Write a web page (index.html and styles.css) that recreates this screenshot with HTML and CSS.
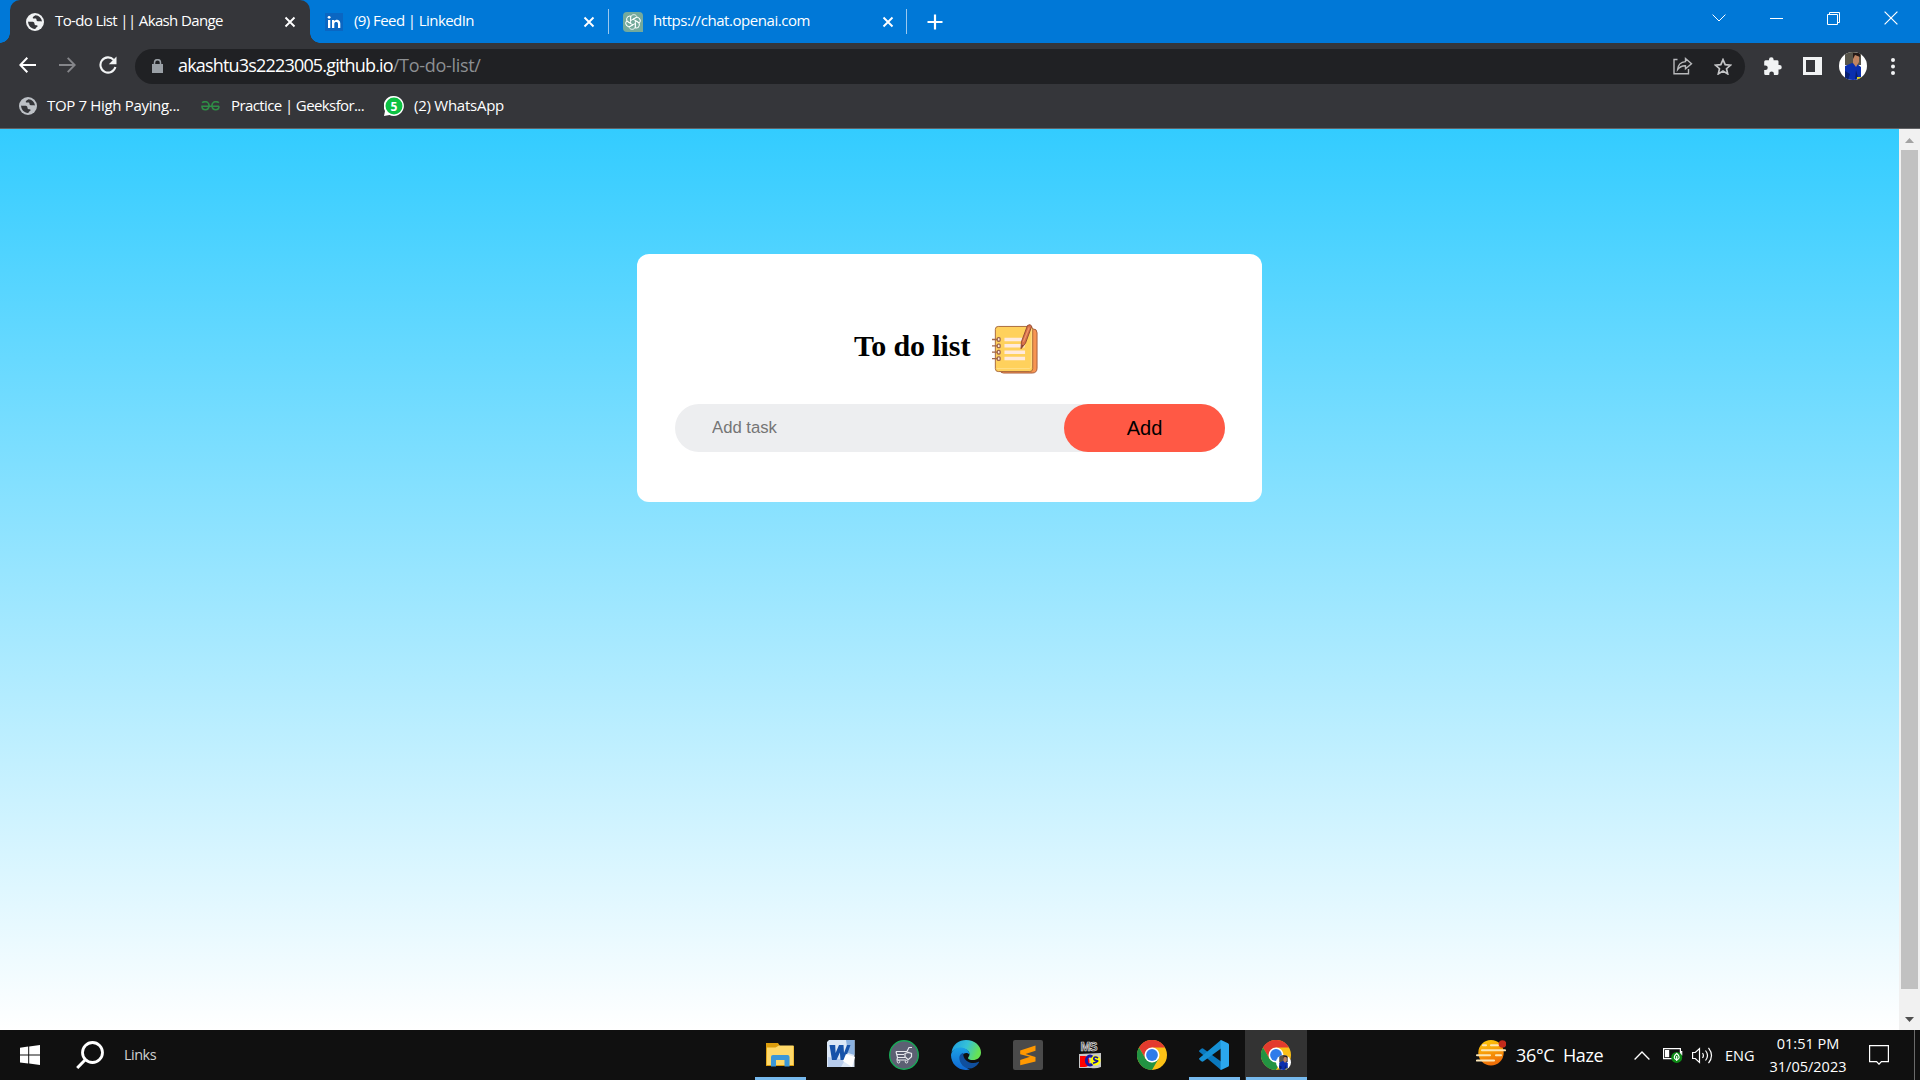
FILE: index.html
```html
<!DOCTYPE html>
<html lang="en">
<head>
<meta charset="utf-8">
<title>To-do List || Akash Dange</title>
<link rel="stylesheet" href="styles.css">
</head>
<body>
<svg class="defs" width="0" height="0">
  <defs>
    <symbol id="globe" viewBox="0 0 18 18">
      <circle cx="9" cy="9" r="9" fill="currentColor"/>
      <path d="M9.500 2.200C8.500 3 7 3.300 6.700 4.800c.2 1.200 2 .6 3.200.8 1 .5.2 1.900 1.200 2.400 1.400.5 3.500-.3 4.900.6-.3-3.400-3-6.200-6.500-6.400zM2.100 8.600c1.600.6 4.400-.3 5.800.7 1 .8.200 2 1.100 2.600 1 .5 2.300-.1 2.700 1-.2 1.100-1.900 1.400-2.400 3-4 .2-7.300-3.100-7.200-7.300z" fill="#35363a"/>
    </symbol>
    <symbol id="cross" viewBox="0 0 12 12"><path d="M1.500 1.500l9 9M10.500 1.500l-9 9" stroke="#fff" stroke-width="1.900" fill="none"/></symbol>
    <symbol id="chrome" viewBox="0 0 30 30">
      <circle cx="15" cy="15" r="15" fill="#fbc116"/>
      <path d="M2 7.500A15 15 0 0 1 28 7.500H15L8.500 18.700z" fill="#e33b2e"/>
      <path d="M2 7.500A15 15 0 0 0 15 30l6.500-11.200L15 22.500 8.500 18.700z" fill="#229342"/>
      <circle cx="15" cy="15" r="7.500" fill="#fff"/>
      <circle cx="15" cy="15" r="5.900" fill="#2f7bea"/>
    </symbol>
    <symbol id="avatar" viewBox="0 0 28 28">
      <clipPath id="round"><circle cx="14" cy="14" r="14"/></clipPath>
      <g clip-path="url(#round)">
        <path d="M0 0h28v28H0z" fill="#fff"/>
        <path d="M6 0h16v13H6z" fill="#57544a"/>
        <path d="M6 14l7-3 5 1 4 3v13H6z" fill="#0b2fae"/>
        <path d="M6 19l5 3-2 6H6zM17 18l2 7-3 3z" fill="#081f70"/>
        <path d="M14 3h6v7l-3 5-3-4z" fill="#c18462"/>
        <path d="M14 1h7v4l-5-2-2 4z" fill="#241a18"/>
        <path d="M18 25h4v3h-4z" fill="#e2d217"/>
      </g>
    </symbol>
  </defs>
</svg>

<header class="browser">
  <div class="tabstrip">
    <div class="tab tab-active">
      <svg class="favicon white" width="18" height="18"><use href="#globe"/></svg>
      <span class="t-title t1">To-do List || Akash Dange</span>
      <svg class="close" width="12" height="12"><use href="#cross"/></svg>
    </div>
    <div class="tab">
      <svg class="favicon" width="18" height="18" viewBox="0 0 18 18"><path d="M0 0h18v18H0z" fill="#0a66c2"/><path d="M3 7h2.300v8H3z M7 7h2.200v1.200C10.500 6 15.300 6 15.300 10.500V15H13v-4.200c0-2.600-3.700-2.400-3.700 0V15H7z" fill="#fff"/><circle cx="4.100" cy="4.300" r="1.400" fill="#fff"/></svg>
      <span class="t-title t2">(9) Feed | LinkedIn</span>
      <svg class="close" width="12" height="12"><use href="#cross"/></svg>
    </div>
    <div class="tab tab-wide">
      <svg class="favicon" width="20" height="20" viewBox="0 0 20 20"><path d="M4 0h12a4 4 0 0 1 4 4v16H4a4 4 0 0 1-4-4V4a4 4 0 0 1 4-4z" fill="#74aa9c"/>
        <g fill="none" stroke="#fff" stroke-width=".9"><path id="petal" d="M7.600 11.400V6c0-3.800 5-4.500 6.300-1.300M9.900 7.300l4.300-2.400"/><use href="#petal" transform="rotate(60 10 10)"/><use href="#petal" transform="rotate(120 10 10)"/><use href="#petal" transform="rotate(180 10 10)"/><use href="#petal" transform="rotate(240 10 10)"/><use href="#petal" transform="rotate(300 10 10)"/></g></svg>
      <span class="t-title t3">https://chat.openai.com</span>
      <svg class="close" width="12" height="12"><use href="#cross"/></svg>
    </div>
    <svg class="newtab" width="16" height="16" viewBox="0 0 16 16"><path d="M8 .5v15M.5 8h15" stroke="#fff" stroke-width="2.200"/></svg>
    <div class="winctl">
      <svg width="14" height="8" viewBox="0 0 14 8"><path d="M.6.6L7 7 13.400.6" fill="none" stroke="#fff"/></svg>
      <svg width="13" height="13" viewBox="0 0 13 13"><path d="M0 6.500h13" stroke="#fff"/></svg>
      <svg width="13" height="13" viewBox="0 0 13 13"><path d="M.5 2.500h10v10H.5zM2.500 2.500v-2h10v10h-2" fill="none" stroke="#fff"/></svg>
      <svg width="14" height="14" viewBox="0 0 14 14"><path d="M.6.6l12.800 12.800M13.400.6L.6 13.400" stroke="#fff" stroke-width="1.200"/></svg>
    </div>
  </div>

  <div class="toolbar">
    <svg class="back" width="17" height="16" viewBox="0 0 17 16"><path d="M8.300.8L1.300 8l7 7.200M1.500 8H17" fill="none" stroke="#fff" stroke-width="2"/></svg>
    <svg class="forward" width="17" height="16" viewBox="0 0 17 16"><path d="M8.700.8l7 7.200-7 7.200M15.500 8H0" fill="none" stroke="#85868a" stroke-width="1.900"/></svg>
    <svg class="reload" width="18" height="18" viewBox="0 0 18 18"><path d="M14.700 3.900A7.600 7.600 0 1 0 16.400 11" fill="none" stroke="#f1f3f4" stroke-width="2.100"/><path d="M17.500.5v7.700H9.800z" fill="#f1f3f4"/></svg>
    <div class="omnibox">
      <svg class="lock" width="11" height="14" viewBox="0 0 11 14"><path d="M0 5h11v9H0z" fill="#9aa0a6"/><path d="M2.500 5.500V3.700a3 3 0 0 1 6 0v1.800" fill="none" stroke="#9aa0a6" stroke-width="1.500"/></svg>
      <span class="host">akashtu3s2223005.github.io</span><span class="path">/To-do-list/</span>
      <svg class="share" width="20" height="18" viewBox="0 0 20 18"><path d="M4.500 2.500H1v14.300h14.500V12" fill="none" stroke="#b8b9bb" stroke-width="1.400"/><path d="M12.500 1.500L18.500 6.700l-6 5V8.800C8.500 8.600 6.500 10 4.600 12.600 5 8 7.500 5 12.500 4.600z" fill="none" stroke="#b8b9bb" stroke-width="1.400"/></svg>
      <svg class="star" width="18" height="17" viewBox="0 0 18 17"><path d="M9 1.600l2.200 5 5.300.5-4 3.600 1.200 5.200L9 13.100l-4.700 2.800 1.200-5.200-4-3.600 5.300-.5z" fill="none" stroke="#c4c5c7" stroke-width="1.700"/></svg>
    </div>
    <svg class="ext" width="18" height="18" viewBox="0 0 18 18"><path d="M1.600 3.200H5V2.500a2.300 2.300 0 0 1 4.600 0v.7h3.500q1.400 0 1.400 1.400v3.500h1a2.200 2.200 0 0 1 0 4.500h-1v3.800q0 1.600-1.500 1.600H9.900v-1.200a2.300 2.300 0 0 0-4.600 0V18H1.600Q.2 18 .2 16.500v-3.400h1.200a2.300 2.300 0 0 0 0-4.700H.2V4.700q0-1.500 1.400-1.500z" fill="#f1f3f4"/></svg>
    <svg class="side" width="19" height="18" viewBox="0 0 19 18"><path fill-rule="evenodd" d="M0 0h19v18H0zM3 3v12h9V3z" fill="#f1f3f4"/></svg>
    <svg class="face" width="28" height="28"><use href="#avatar"/></svg>
    <svg class="dots" width="4" height="17" viewBox="0 0 4 17"><g fill="#f1f3f4"><circle cx="2" cy="2" r="2"/><circle cx="2" cy="8.500" r="2"/><circle cx="2" cy="15" r="2"/></g></svg>
  </div>

  <nav class="bookmarks">
    <svg class="gray" width="18" height="18"><use href="#globe"/></svg>
    <span class="b1">TOP 7 High Paying...</span>
    <svg class="gfg" width="19" height="10" viewBox="0 0 19 10"><path d="M1 1.700C5-1 8.500 1.800 8 5.200 7.500 10 1 9.800 1 5.200H18M18 1.700C14-1 10.500 1.800 11 5.200 11.500 10 18 9.800 18 5.200" fill="none" stroke="#2f8d46" stroke-width="1.600"/></svg>
    <span class="b2">Practice | Geeksfor...</span>
    <svg class="wa" width="20" height="20" viewBox="0 0 20 20"><path d="M10 0a10 10 0 1 1-4.500 19L0 20l1-5A10 10 0 0 1 10 0z" fill="#fff"/><circle cx="10" cy="10" r="8.500" fill="#0dc143"/><text x="10" y="14.500" class="count">5</text></svg>
    <span class="b3">(2) WhatsApp</span>
  </nav>
</header>

<div class="viewport">
  <main class="page">
    <section class="card">
      <h2><span>To do list</span>
        <svg width="46" height="50" viewBox="0 0 48 51" preserveAspectRatio="none">
          <path d="M8 5h35q4 0 4 4v36q0 5-5 5H12q-3 0-4-3z" fill="#f79552" stroke="#a55b3a"/>
          <rect x="3.500" y="2.500" width="39" height="46" rx="3" fill="#ffd15c" stroke="#a8693c"/>
          <path d="M5 45.500h34q2 0 2-3V4" fill="none" stroke="#ffe08a"/>
          <g fill="#ffeade"><path d="M13 14h21v3.500H13zM13 20.500h21V24H13zM13 27h21.500v3.500H13zM13 33.500h21.500V37H13z"/></g>
          <g fill="#ffe9dc" stroke="#a16649" stroke-width="1.300"><rect x="5.500" y="14" width="3" height="3.600" rx="1"/><rect x="5.500" y="20.500" width="3" height="3.600" rx="1"/><rect x="5.500" y="27" width="3" height="3.600" rx="1"/><rect x="5.500" y="33.500" width="3" height="3.600" rx="1"/><path d="M0 15.800h5.500M0 22.300h5.500M0 28.800h5.500M0 35.300h5.500"/></g>
          <path d="M37 1.500q3-2 4.500.7L35 19.500l-4.700 5.700.4-7z" fill="#d9714a" stroke="#954b34"/>
          <path d="M38.800 3.500L32.800 18" stroke="#f1996b" stroke-width="1.200"/>
          <path d="M31 21l2 1-2.700 3.200z" fill="#834232"/>
        </svg>
      </h2>
      <form class="row">
        <input type="text" placeholder="Add task">
        <button type="button">Add</button>
      </form>
    </section>
  </main>
  <aside class="scrollbar">
    <svg width="9" height="5" viewBox="0 0 9 5"><path d="M0 5l4.500-5L9 5z" fill="#a3a3a3"/></svg>
    <div class="thumb"></div>
    <svg width="9" height="5" viewBox="0 0 9 5"><path d="M0 0l4.500 5L9 0z" fill="#505050"/></svg>
  </aside>
</div>

<footer class="taskbar">
  <div class="left">
    <svg width="20" height="20" viewBox="0 0 20 20"><path d="M0 2.800l8.200-1.200V9.500H0zM9.200 1.400L20 0v9.500H9.200zM0 10.500h8.200v8L0 17.400zM9.200 10.500H20V20L9.200 18.600z" fill="#fff"/></svg>
    <svg class="search" width="28" height="28" viewBox="0 0 28 28"><circle cx="16.500" cy="11.500" r="10" fill="none" stroke="#fff" stroke-width="2.800"/><path d="M9.500 18.500L1.200 27" stroke="#fff" stroke-width="3"/></svg>
    <span class="links">Links</span>
  </div>
  <div class="apps">
    <div class="app open"><svg width="28" height="24" viewBox="0 0 28 24"><path d="M0 0h12l2 3H28v20H0z" fill="#dc9d0c"/><path d="M1 4.500h8.500L13 2.500h14.500V22H.7z" fill="#ffd969"/><path d="M5 23.500V14q0-2 2-2h14.500q2 0 2 2v9.500h-5V17H10v6.500z" fill="#3c98d8"/></svg></div>
    <div class="app word"><svg width="28" height="28" viewBox="0 0 28 28"><path d="M2 0h25.500v27H0V2z" fill="#dbe7f6"/><path d="M19 0h8.500v15L21 13z" fill="#8bb1df"/><path d="M1 17l17 3-4 7H1z" fill="#b7ccec"/><path d="M2.500 5h5.700l.4 8L12 5h4.500l.5 8 3-8h3.500L18 20h-4.500l-.6-7.500L9.500 20H5z" fill="#1652a9"/><path d="M19 14l9 3-3 10-9-6z" fill="#fff"/></svg></div>
    <div class="app"><svg width="30" height="30" viewBox="0 0 30 30"><circle cx="15" cy="15" r="14.300" fill="#5c6073" stroke="#18a957" stroke-width="1.400"/><path d="M7 11.500l1.500 6H16M7 11.500h11l2-4h3M8.500 17.500L8 20h9M8 14.500h7" fill="none" stroke="#e8e9ee" stroke-width="1.200"/><circle cx="9.500" cy="21.700" r="1.300" fill="none" stroke="#e8e9ee"/><circle cx="17.500" cy="21.700" r="1.300" fill="none" stroke="#e8e9ee"/><path d="M16 13.500l3.200-1 3.300 1v3.300l-3.300 3-3.200-3z" fill="#5c6073" stroke="#e8e9ee" stroke-width="1.200"/></svg></div>
    <div class="app"><svg width="30" height="30" viewBox="0 0 30 30">
      <defs><linearGradient id="eg" x1="0" x2="1" y1="0" y2=".3"><stop offset="0" stop-color="#1c9be0"/><stop offset=".55" stop-color="#35c1d8"/><stop offset="1" stop-color="#66e254"/></linearGradient><linearGradient id="eb" x1="0" y1="0" x2="0" y2="1"><stop offset="0" stop-color="#1ba0e6"/><stop offset="1" stop-color="#1067d2"/></linearGradient></defs>
      <path d="M.5 12C2 4 8 0 15 0c9 0 15 6 15 12.500 0 5-4 7.500-8 7.500-5 0-5.500-2-4.500-3 2-2.500 1-6-2.500-7.500C9 7 3 9 .5 12z" fill="url(#eg)"/>
      <path d="M0 15C.5 10 5 7 10 7.500c5 .2 8.500 3.500 8.700 7.200-2.500-3-6.500-1.700-7.700 1.300-1 4 2 11 8 13.500C9 32 0 25 0 15z" fill="url(#eb)"/>
      <path d="M11.500 13C7 15 7.500 21 11.500 25.500c5 4.800 12 4 16.500-3 .2-.7-.3-.9-.9-.6-5 2.600-12 .5-14.100-4.400-.8-1.700-.9-3-.5-4.500z" fill="#104f9e"/></svg></div>
    <div class="app"><svg width="30" height="30" viewBox="0 0 30 30"><rect width="30" height="30" rx="2" fill="#4a4a4a"/><path d="M7.200 10.600L22.500 5.500v5.200L12.500 14l10 2.900v4.600L7.200 25.200V20l9.800-3.200-9.800-2.600z" fill="#ff9800"/></svg></div>
    <div class="app"><svg width="22" height="28" viewBox="0 0 22 28"><path d="M0 13l22-1v14q-5 2-10 1H0z" fill="#c7c7c7"/><text x="1.500" y="10" class="ms" textLength="17">MS</text><path d="M1 15h5c6 0 6 11 0 11H1z" fill="#f00"/><ellipse cx="11" cy="19.500" rx="3.600" ry="4.500" fill="none" stroke="#1717a8" stroke-width="3"/><circle cx="16.500" cy="19.500" r="5" fill="#ff0"/><path d="M19 17q-3-2-4 0t2.500 2.500-3.500 2.800" fill="none" stroke="#16169c" stroke-width="1.700"/></svg></div>
    <div class="app"><svg width="30" height="30"><use href="#chrome"/></svg></div>
    <div class="app open"><svg width="30" height="30" viewBox="0 0 30 30"><path d="M2.300 8.800L.3 10.500q-.5.700 0 1.300L22 30V21.500L4.500 8.700q-1.200-.7-2.200.1z" fill="#0a78be"/><path d="M2.300 21.200l-2-1.700q-.5-.7 0-1.300L22 0v8.500L4.500 21.300q-1.200.7-2.200-.1z" fill="#1690d4"/><path d="M22 0l7 3.200q1 .5 1 1.500v20.600q0 1-1 1.500L22 30c-.6-.5-.7-1.300-.4-2.200V2.200c-.3-.9-.2-1.700.4-2.200z" fill="#2ba7ee"/></svg></div>
    <div class="app open current"><svg width="30" height="30" viewBox="0 0 30 30"><use href="#chrome" width="30" height="30"/><use href="#avatar" x="15" y="15" width="15" height="15"/></svg></div>
  </div>
  <div class="tray">
    <svg width="30" height="26" viewBox="0 0 30 26"><defs><linearGradient id="sun" x1="0" y1="0" x2=".3" y2="1"><stop offset="0" stop-color="#ffcf0a"/><stop offset="1" stop-color="#f07008"/></linearGradient></defs><circle cx="15" cy="12.700" r="12.700" fill="url(#sun)"/><g stroke="#fbe6b5" stroke-width="2.100" stroke-linecap="round"><path d="M7 5.200h3M15 5.200h7M6 10.300h23M1 15.200h13M20 15.200h5M1 20.500h17"/></g><circle cx="26.500" cy="4" r="3.800" fill="#c42b1c"/></svg>
    <span class="temp">36°C&nbsp; Haze</span>
    <svg class="up" width="16" height="9" viewBox="0 0 16 9"><path d="M.6 8.500L8 1l7.400 7.500" fill="none" stroke="#fff" stroke-width="1.300"/></svg>
    <svg class="batt" width="20" height="16" viewBox="0 0 20 16"><path d="M.6 1.600h16.800v10H.6zM17.500 4.500h1.200v4" fill="none" stroke="#fff" stroke-width="1.200"/><path d="M2 3h4.200v7.200H2z" fill="#fff"/><circle cx="13.700" cy="10.400" r="5.500" fill="#0e8a16"/><path d="M13.700 6.500q5 4 0 6.500-5-2.500 0-6.500zM13.700 9v5" fill="none" stroke="#fff" stroke-width="1.200"/></svg>
    <svg class="vol" width="21" height="17" viewBox="0 0 21 17"><path d="M.6 5.500h2.700L7.500 1.600v13.800L3.300 11.500H.6z" fill="none" stroke="#fff" stroke-width="1.200"/><path d="M10.500 6q1.800 2.500 0 5M13.500 3.500q4 5 0 10M16.500.8q6 7.700 0 15.400" fill="none" stroke="#fff" stroke-width="1.200"/></svg>
    <span class="lang">ENG</span>
    <div class="clock"><span class="time">01:51 PM</span><span class="date">31/05/2023</span></div>
    <svg class="note" width="20" height="20" viewBox="0 0 20 20"><path d="M.6.6h18.800v16h-7L10 19.200 7.600 16.600h-7z" fill="none" stroke="#fff" stroke-width="1.200"/></svg>
    <i class="peek"></i>
  </div>
</footer>
</body>
</html>
```
FILE: styles.css
```css
* { box-sizing: border-box; }
body {
  margin: 0;
  width: 1920px;
  height: 1080px;
  overflow: hidden;
  display: flex;
  flex-direction: column;
  font-family: "Open Sans", "Noto Sans", sans-serif;
  font-size: 15px;
  color: #fff;
}
.defs { position: absolute; }
svg { display: block; flex: none; }
span { white-space: nowrap; }

/* Browser window */
.browser { height: 129px; background: #35363a; border-bottom: 1px solid #626366; }
.tabstrip { height: 43px; background: #0078d7; display: flex; align-items: center; padding-left: 10px; }
.tab { width: 299px; height: 25px; display: flex; align-items: center; padding: 0 13px 0 15px; border-right: 1px solid #9bc9ef; }
.tab-wide { padding: 0 12px 0 14px; width: 298px; }
.tab-active {
  position: relative;
  width: 300px;
  height: 43px;
  background: #35363a;
  border: 0;
  border-radius: 10px 10px 0 0;
  padding: 0 14px 0 16px;
}
.tab-active::before, .tab-active::after {
  content: "";
  position: absolute;
  bottom: 0;
  width: 10px;
  height: 10px;
}
.tab-active::before { left: -10px; background: radial-gradient(circle at 0 0, transparent 9.5px, #35363a 10px); }
.tab-active::after { right: -10px; background: radial-gradient(circle at 100% 0, transparent 9.5px, #35363a 10px); }
.t-title { margin-left: 11px; line-height: 20px; margin-top: -3px; }
.t1 { letter-spacing: -.63px; }
.t2 { letter-spacing: -.57px; }
.t3 { letter-spacing: -.44px; }
.tab-wide .t-title { margin-left: 10px; }
.close { margin-left: auto; }
.white { color: #f1f3f4; }
.newtab { margin-left: 20px; }
.winctl { margin-left: auto; margin-right: 22px; display: flex; align-items: center; gap: 44px; height: 36px; align-self: flex-start; }

.toolbar { height: 45px; display: flex; align-items: center; padding: 1px 25px 0 19px; }
.toolbar .back, .toolbar .forward, .toolbar .reload { margin-top: -2px; }
.forward { margin-left: 23px; }
.reload { margin-left: 23px; }
.omnibox { margin-left: 18px; width: 1610px; height: 35px; border-radius: 18px; background: #202124; display: flex; align-items: center; padding: 0 13px 0 17px; font-size: 18px; }
.host { margin-left: 15px; letter-spacing: -.82px; margin-top: -2px; }
.path { color: #8d9093; letter-spacing: -.3px; margin-top: -2px; }
.share { margin-left: auto; }
.star { margin-left: 21px; }
.ext { margin-left: 19px; }
.side { margin-left: 21px; }
.face { margin-left: 17px; }
.dots { margin-left: auto; }

.bookmarks { height: 36px; display: flex; align-items: center; padding-left: 19px; }
.bookmarks span { margin-top: -2px; }
.gray { color: #bdc1c6; }
.b1 { margin-left: 10px; width: 135px; letter-spacing: -.33px; }
.gfg { margin-left: 19px; }
.b2 { margin-left: 11px; width: 133px; letter-spacing: -.6px; }
.wa { margin-left: 20px; }
.b3 { margin-left: 10px; letter-spacing: -.25px; }
.count { font: bold 12px "Open Sans", sans-serif; fill: #fff; text-anchor: middle; }

/* Page */
.viewport { flex: 1; display: flex; }
.page { width: 1899px; background: linear-gradient(#33ccff, #fff); padding-top: 125px; }
.card { width: 625px; height: 248px; margin: 0 auto; padding: 70px 37px 50px 38px; background: #fff; border-radius: 12px; color: #000; }
h2 { margin: 0 0 29px; height: 51px; display: flex; align-items: center; padding-left: 179px; gap: 21px; font: bold 30px "Liberation Serif", serif; }
h2 span { margin-top: -7px; width: 117px; letter-spacing: -.1px; }
h2 svg { margin-top: -1px; }
.row { display: flex; width: 550px; height: 48px; background: #edeef0; border-radius: 25px; }
.row input { flex: 1; min-width: 0; border: 0; outline: 0; background: transparent; padding: 0 0 0 37px; font: 16.700px "Liberation Sans", sans-serif; }
.row input::placeholder { color: #757575; }
.row button { width: 161px; border: 0; border-radius: 25px; background: #ff5945; color: #000; font: 20px "Liberation Sans", sans-serif; padding: 0; }
.scrollbar { width: 21px; background: #f1f1f1; display: flex; flex-direction: column; align-items: center; padding: 9px 0 8px; }
.thumb { width: 17px; height: 839px; margin: 7px 0 28px; background: #c1c1c1; }

/* Taskbar */
.taskbar { height: 50px; background: #101010; display: grid; grid-template-columns: 749px 558px 1fr; }
.left { display: flex; align-items: center; padding-left: 20px; }
.search { margin-left: 36px; }
.links { margin: -2px 0 0 20px; font-size: 14.500px; letter-spacing: -.5px; color: #d0d0d0; }
.apps { display: flex; }
.app { width: 62px; display: flex; align-items: center; justify-content: center; }
.word { padding: 0 2px 2px 0; }
.open { background: linear-gradient(#76b9ed, #76b9ed) 50% 100% / 51px 3px no-repeat; }
.current { background: linear-gradient(#76b9ed, #76b9ed) 50% 100% / 61px 3px no-repeat, #333; }
.ms { font: bold 12px "Liberation Sans", sans-serif; fill: #333; stroke: #ddd; stroke-width: .7; }
.tray { display: flex; align-items: center; padding-left: 169px; }
.tray > svg:first-child { margin-top: -4px; }
.temp { margin-left: 10px; width: 88px; font-size: 18px; letter-spacing: -.35px; }
.up { margin-left: 30px; }
.batt { margin-left: 13px; }
.vol { margin-left: 9px; }
.lang { margin-left: 12px; width: 30px; font-size: 14.500px; }
.clock { width: 92px; margin-left: 7px; display: flex; flex-direction: column; align-items: center; font-size: 14.500px; line-height: 23px; }
.note { margin-left: 15px; }
.peek { width: 1px; height: 50px; margin-left: 25px; background: #6a6a6a; }
```
